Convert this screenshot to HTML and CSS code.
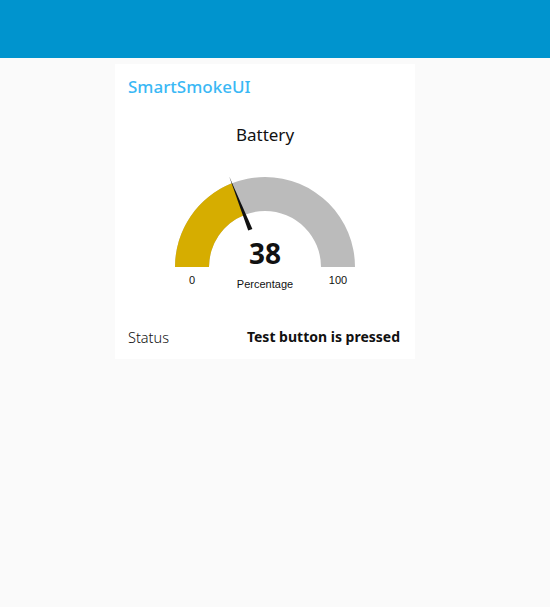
FILE: index.html
```html
<!DOCTYPE html>
<html lang="en">
<head>
<meta charset="utf-8">
<title>SmartSmokeUI</title>
<link rel="stylesheet" href="styles.css">
</head>
<body>
<header class="topbar"></header>
<main class="page">
  <section class="card">
    <h1 class="card-title">SmartSmokeUI</h1>
    <h2 class="gauge-title">Battery</h2>
    <svg class="gauge" width="300" height="140" viewBox="0 0 300 140">
      <path class="gauge-bg" d="M 60 103 A 90 90 0 0 1 240 103 L 206 103 A 56 56 0 0 0 94 103 Z"/>
      <path class="gauge-fill" d="M 60 103 A 90 90 0 0 1 116.9 19.3 L 129.4 50.9 A 56 56 0 0 0 94 103 Z"/>
      <polygon class="gauge-needle" points="137.4,65.0 133.2,66.6 114.3,12.8"/>
      <text class="gauge-value" x="150" y="100" text-anchor="middle">38</text>
      <text class="gauge-minmax" x="77" y="120" text-anchor="middle">0</text>
      <text class="gauge-minmax" x="223" y="120" text-anchor="middle">100</text>
      <text class="gauge-label" x="150" y="124" text-anchor="middle">Percentage</text>
    </svg>
    <div class="status-row">
      <span class="status-label">Status</span>
      <span class="status-value">Test button is pressed</span>
    </div>
  </section>
</main>
</body>
</html>
```
FILE: styles.css
```css
html, body {
  margin: 0;
  padding: 0;
}
body {
  background: #fafafa;
  font-family: "Noto Sans", "Open Sans", sans-serif;
  color: #111;
  width: 550px;
  height: 607px;
}
.topbar {
  height: 58px;
  background: #0094ce;
}
.page {
  padding: 6px 0 0 115px;
}
.card {
  width: 300px;
  height: 295px;
  box-sizing: border-box;
  background: #fff;
  padding: 11px 15px 0 13px;
  display: flex;
  flex-direction: column;
}
.card-title {
  margin: 0;
  font-size: 17px;
  line-height: 24px;
  font-weight: 500;
  color: #3ab8f5;
}
.gauge-title {
  margin: 24px 0 0 0;
  font-size: 17px;
  line-height: 24px;
  font-weight: 400;
  text-align: center;
  color: #111;
  padding-left: 2px;
}
.gauge {
  display: block;
  margin: 17px 0 0 -13px;
}
.gauge-bg {
  fill: #bbbbbb;
}
.gauge-fill {
  fill: #d6ad00;
}
.gauge-needle {
  fill: #111;
}
.gauge-value {
  font-family: "Noto Sans", sans-serif;
  font-weight: 700;
  font-size: 28px;
  fill: #111;
}
.gauge-minmax {
  font-family: "Liberation Sans", Arial, sans-serif;
  font-size: 11px;
  fill: #111;
}
.gauge-label {
  font-family: "Liberation Sans", Arial, sans-serif;
  font-size: 11px;
  fill: #111;
}
.status-row {
  margin-top: 21px;
  display: flex;
  justify-content: space-between;
  align-items: center;
  line-height: 24px;
  font-size: 14px;
}
.status-label {
  font-weight: 300;
  font-size: 14.5px;
}
.status-value {
  font-weight: 700;
}
```
